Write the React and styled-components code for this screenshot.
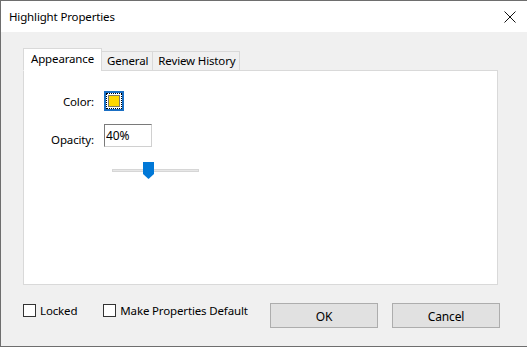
import React from 'react';
import styled, { createGlobalStyle } from 'styled-components';

const Global = createGlobalStyle`
  html, body { margin: 0; padding: 0; background: #f0f0f0; }
  body {
    font-family: "Noto Sans", "Open Sans", sans-serif;
    font-size: 11.5px;
    letter-spacing: -0.15px;
    color: #000;
  }
`;

const Window = styled.div`
  width: 527px;
  height: 347px;
  box-sizing: border-box;
  border-top: 1px solid #6e6e6e;
  border-left: 1px solid #6e6e6e;
  border-bottom: 1px solid #6e6e6e;
  background: #f0f0f0;
  display: flex;
  flex-direction: column;
`;

const TitleBar = styled.div`
  height: 31px;
  background: #fff;
  display: flex;
  align-items: center;
  justify-content: space-between;
  padding: 0 11px 0 8px;
`;

const Body = styled.div`
  flex: 1;
  padding: 17px 27px 0 22px;
  display: flex;
  flex-direction: column;
`;

const TabStrip = styled.div`
  display: flex;
  align-items: flex-end;
  height: 22px;
  position: relative;
  z-index: 1;
  margin-bottom: -1px;
`;

const Tab = styled.div`
  box-sizing: border-box;
  height: ${(p) => (p.$active ? '23px' : '20px')};
  padding: ${(p) => (p.$active ? '2px 7px 0 7px' : '1px 4px 0 5px')};
  margin-left: ${(p) => (p.$active ? '0' : '-1px')};
  border: 1px solid #d9d9d9;
  border-bottom: ${(p) => (p.$active ? '1px solid #fff' : '1px solid #d9d9d9')};
  background: ${(p) => (p.$active ? '#fff' : '#f0f0f0')};
  white-space: nowrap;
  line-height: 16px;
  &:first-child { margin-left: 0; }
`;

const Pane = styled.div`
  width: 475px;
  height: 215px;
  box-sizing: border-box;
  background: #fff;
  border: 1px solid #d9d9d9;
  padding: 20px 0 0 0;
`;

const FieldGrid = styled.div`
  display: grid;
  grid-template-columns: 70px auto;
  column-gap: 11px;
  row-gap: 13px;
  align-items: center;
`;

const Label = styled.div`
  text-align: right;
  padding-top: ${(p) => p.$drop || 0}px;
`;

const Swatch = styled.div`
  width: 20px;
  height: 20px;
  box-sizing: border-box;
  background: #1a6fc4;
  padding: 2px;
  margin-left: -1px;
`;

const SwatchFocus = styled.div`
  width: 100%;
  height: 100%;
  box-sizing: border-box;
  border: 1px dotted #000;
  background: #fff;
  padding: 1px;
`;

const SwatchFill = styled.div`
  width: 100%;
  height: 100%;
  box-sizing: border-box;
  background: #ffd800;
  border: 1px solid #7a7a6a;
`;

const TextInput = styled.input`
  width: 48px;
  height: 23px;
  box-sizing: border-box;
  border: 1px solid #7a7a7a;
  border-right-color: #d0d0d0;
  border-bottom-color: #d0d0d0;
  font-family: inherit;
  font-size: 12px;
  letter-spacing: -0.15px;
  padding: 0 1px;
  margin-left: -1px;
  outline: none;
`;

const SliderRow = styled.div`
  padding: 22px 0 0 88px;
`;

const Track = styled.div`
  position: relative;
  width: 87px;
  height: 3px;
  background: #e7e7e7;
  border: 1px solid #d6d6d6;
  box-sizing: border-box;
`;

const Thumb = styled.svg`
  position: absolute;
  left: 30px;
  top: -8px;
`;

const Footer = styled.div`
  display: flex;
  align-items: flex-start;
  padding-top: 18px;
`;

const CheckLabel = styled.label`
  display: flex;
  align-items: center;
  gap: 4px;
  white-space: nowrap;
  margin-right: ${(p) => p.$gap}px;
`;

const Box = styled.span`
  width: 13px;
  height: 13px;
  box-sizing: border-box;
  border: 1px solid #333;
  background: #fff;
`;

const ButtonGroup = styled.div`
  margin-left: auto;
  display: flex;
  gap: 14px;
`;

const Button = styled.button`
  width: 108px;
  height: 25px;
  box-sizing: border-box;
  background: #e1e1e1;
  border: 1px solid #adadad;
  font-family: inherit;
  font-size: 12px;
  letter-spacing: -0.15px;
  color: #000;
  padding: 2px 0 0;
`;

export default function App() {
  return (
    <>
      <Global />
      <Window>
        <TitleBar>
          <span>Highlight Properties</span>
          <svg width="12" height="12" viewBox="0 0 12 12">
            <path d="M0.5 0.5 L11.5 11.5 M11.5 0.5 L0.5 11.5" stroke="#111" strokeWidth="1" />
          </svg>
        </TitleBar>
        <Body>
          <TabStrip>
            <Tab $active>Appearance</Tab>
            <Tab>General</Tab>
            <Tab>Review History</Tab>
          </TabStrip>
          <Pane>
            <FieldGrid>
              <Label $drop={1}>Color:</Label>
              <Swatch>
                <SwatchFocus>
                  <SwatchFill />
                </SwatchFocus>
              </Swatch>
              <Label $drop={7}>Opacity:</Label>
              <TextInput defaultValue="40%" />
            </FieldGrid>
            <SliderRow>
              <Track>
                <Thumb width="11" height="17" viewBox="0 0 11 17">
                  <path d="M0 0 H11 V12 L5.5 17 L0 12 Z" fill="#0078d7" />
                </Thumb>
              </Track>
            </SliderRow>
          </Pane>
          <Footer>
            <CheckLabel $gap={26}>
              <Box />
              Locked
            </CheckLabel>
            <CheckLabel $gap={0}>
              <Box />
              Make Properties Default
            </CheckLabel>
            <ButtonGroup>
              <Button>OK</Button>
              <Button>Cancel</Button>
            </ButtonGroup>
          </Footer>
        </Body>
      </Window>
    </>
  );
}
